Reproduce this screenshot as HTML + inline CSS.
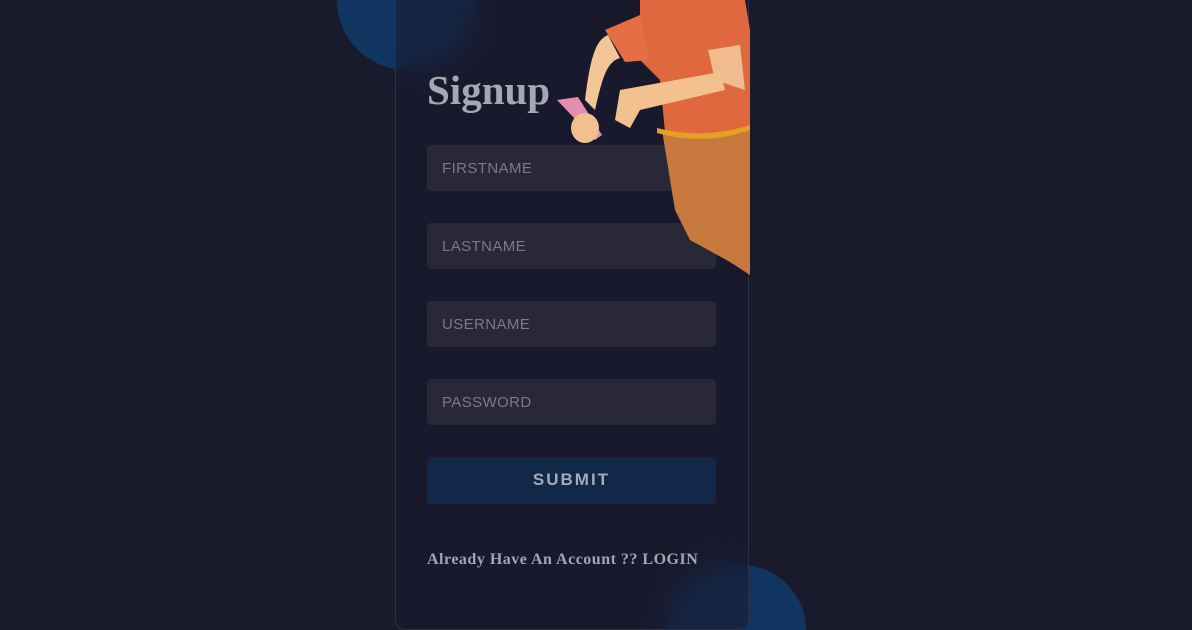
<!DOCTYPE html>
<html style="overflow:hidden;height:630px"><head><style>
*{margin:0;padding:0;box-sizing:border-box}
html,body{width:1192px;height:630px;overflow:hidden}
body{background:#1a1a2d;position:relative;font-family:"Liberation Sans",sans-serif}
.wrap{position:absolute;left:0;top:0;width:1192px;height:630px;overflow:hidden}
.c{position:absolute;border-radius:50%;background:#0f3560}
.card{position:absolute;left:395px;top:-10px;width:354px;height:640px;border:1px solid #2f3042;border-radius:10px;background:rgba(26,26,45,0.55);backdrop-filter:blur(14px)}
h1{position:absolute;left:427px;top:66px;font-family:"Liberation Serif",serif;font-size:41px;color:#a7a7b2;font-weight:bold}
.in{position:absolute;left:427px;width:289px;height:46px;background:#292837;border-radius:4px;color:#7b7a86;font-size:15px;letter-spacing:.4px;padding:15px 0 0 15px}
.btn{position:absolute;left:427px;top:457px;width:289px;height:47px;background:#122849;border-radius:4px;color:#a6a9b8;font-weight:bold;font-size:17px;letter-spacing:2px;text-align:center;line-height:46px}
.lg{position:absolute;left:427px;top:551px;font-family:"Liberation Serif",serif;font-size:16px;letter-spacing:.5px;color:#a5a5b0;font-weight:bold;white-space:nowrap}
</style></head><body><div class="wrap">
<div class="c" style="left:337px;top:-70px;width:140px;height:140px"></div>
<div class="c" style="left:666px;top:565px;width:140px;height:65px;border-radius:70px 70px 0 0"></div>
<div class="card"></div>
<h1>Signup</h1>
<div class="in" style="top:145px">FIRSTNAME</div>
<div class="in" style="top:223px">LASTNAME</div>
<div class="in" style="top:301px">USERNAME</div>
<div class="in" style="top:379px">PASSWORD</div>
<div class="btn">SUBMIT</div>
<div class="lg">Already Have An Account ?? LOGIN</div>
<svg style="position:absolute;left:540px;top:0" width="212" height="280" viewBox="0 0 212 280">
<path d="M122 130 L210 120 L210 275 L190 262 L150 240 L135 210 Z" fill="#d6813f" opacity=".92"/>
<path d="M100 0 L205 0 L210 30 L210 130 L170 138 L125 132 L120 80 L100 60 Z" fill="#e0683e"/>
<path d="M65 30 L100 15 L110 60 L85 62 Z" fill="#e66e45"/>
<path d="M168 50 L200 45 L205 90 L175 80 Z" fill="#f0bc8f"/>
<path d="M68 35 C55 40 50 60 45 100 L55 110 C62 80 66 62 80 58 Z" fill="#f3c697"/>
<path d="M80 90 L180 72 L185 90 L100 110 L90 128 L75 120 Z" fill="#f2c18f"/>
<path d="M17 100 L38 97 L62 135 L55 140 Z" fill="#e58fb0"/>
<ellipse cx="45" cy="128" rx="14" ry="15" fill="#f0c08f"/>
<path d="M117 128 Q165 140 210 125 L210 130 Q165 146 117 133 Z" fill="#e8a020"/>
</svg>
</div></body></html>
